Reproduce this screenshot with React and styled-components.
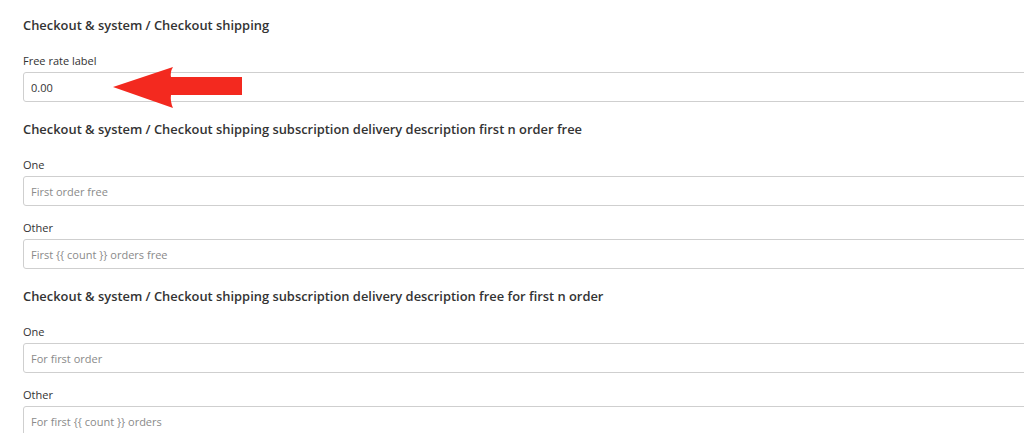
import React from 'react'
import styled, { createGlobalStyle } from 'styled-components'

const GlobalStyle = createGlobalStyle`
  html, body {
    margin: 0;
    padding: 0;
    background: #fff;
    overflow: hidden;
  }
  body {
    font-family: "Open Sans", "Noto Sans", sans-serif;
    color: #333;
  }
`

const Page = styled.div`
  position: relative;
  width: 1060px;
  padding: 17px 0 0 23px;
`

const Section = styled.section`
  display: flex;
  flex-direction: column;
  margin-bottom: 19px;
`

const Heading = styled.h3`
  margin: 0 0 20px;
  font-size: 12.9px;
  line-height: 16px;
  font-weight: 600;
  color: #333;
`

const Field = styled.div`
  display: flex;
  flex-direction: column;
  gap: 3px;
  margin-bottom: 14px;
  &:last-child {
    margin-bottom: 0;
  }
`

const Label = styled.label`
  font-size: 11px;
  line-height: 16px;
  color: #333;
`

const Input = styled.input`
  box-sizing: border-box;
  width: 100%;
  height: 30px;
  padding: 0 7px;
  border: 1px solid #cfcfcf;
  border-radius: 3px;
  font-family: inherit;
  font-size: 11px;
  color: #333;
  background: #fff;
  outline: none;
  &::placeholder {
    color: #8a8a8a;
  }
`

const Arrow = styled.svg`
  position: absolute;
  left: 112px;
  top: 66px;
`

const sections = [
  {
    title: 'Checkout & system / Checkout shipping',
    fields: [{ label: 'Free rate label', value: '0.00' }],
  },
  {
    title: 'Checkout & system / Checkout shipping subscription delivery description first n order free',
    fields: [
      { label: 'One', placeholder: 'First order free' },
      { label: 'Other', placeholder: 'First {{ count }} orders free' },
    ],
  },
  {
    title: 'Checkout & system / Checkout shipping subscription delivery description free for first n order',
    fields: [
      { label: 'One', placeholder: 'For first order' },
      { label: 'Other', placeholder: 'For first {{ count }} orders' },
    ],
  },
]

export default function App() {
  return (
    <>
      <GlobalStyle />
      <Page>
        {sections.map((section) => (
          <Section key={section.title}>
            <Heading>{section.title}</Heading>
            {section.fields.map((field) => (
              <Field key={field.label}>
                <Label>{field.label}</Label>
                <Input
                  defaultValue={field.value}
                  placeholder={field.placeholder}
                  readOnly
                />
              </Field>
            ))}
          </Section>
        ))}
        <Arrow width="132" height="43" viewBox="0 0 132 43">
          <path
            d="M1 21 L61 1 Q58 6 59 11 L130 11 L130 29 L59 29 Q58 35 61 42 Z"
            fill="#f3291f"
          />
        </Arrow>
      </Page>
    </>
  )
}
